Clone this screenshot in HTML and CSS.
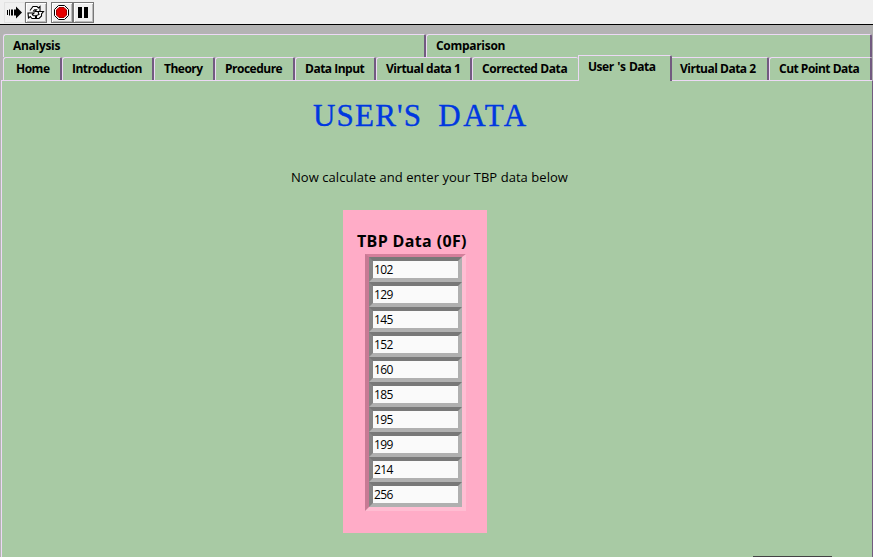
FILE: index.html
```
<!DOCTYPE html>
<html lang="en">
<head>
<meta charset="utf-8">
<title>User's Data</title>
<link rel="stylesheet" href="styles.css">
</head>
<body>
<header class="toolbar">
  <span class="tool run"><svg width="19" height="19" viewBox="0 0 19 19"><path d="M2 7h1v5h-1zM4 6.500h1v6h-1zM6 6.500h2v6h-2zM9 6.500h2V3.500l6 6l-6 6V12.500h-2z"/></svg></span>
  <span class="tool sync"><svg width="19" height="19" viewBox="0 0 19 19" fill="#fff" stroke="#000" stroke-width="1.100"><path d="M4 7.500L7 3.500H11L12.500 5L14 3.500V8.500H9L10.500 6.800H8.500L7 8.500"/><path d="M12 8.500H17.500L15.500 11V13L13 15.500H10.500V12.500L13 11.500Z"/><path d="M2 10H8L6.300 11.800L7.500 12.800H9.500V15.500H6L4.300 13.500L2.500 15Z"/></svg></span>
  <span class="tool stop"><svg width="19" height="19" viewBox="0 0 19 19"><path d="M6.500 2.500h6l4 4v6l-4 4h-6l-4-4v-6z" fill="#fff" stroke="#000"/><path d="M7 4.500h5l2.500 2.500v5l-2.500 2.500h-5l-2.500-2.500v-5z" fill="#e60000" stroke="#a00000"/></svg></span>
  <span class="tool pause"><svg width="19" height="19" viewBox="0 0 19 19" shape-rendering="crispEdges"><path d="M4 4h4v11h-4zM10 4h4v11h-4z"/></svg></span>
</header>
<nav class="tabs">
  <div class="row upper">
    <span class="tab">Analysis</span>
    <span class="tab">Comparison</span>
  </div>
  <div class="row lower">
    <span class="tab">Home</span>
    <span class="tab">Introduction</span>
    <span class="tab">Theory</span>
    <span class="tab">Procedure</span>
    <span class="tab">Data Input</span>
    <span class="tab">Virtual data 1</span>
    <span class="tab flat">Corrected Data</span>
    <span class="tab active">User 's Data</span>
    <span class="tab after">Virtual Data 2</span>
    <span class="tab">Cut Point Data</span>
  </div>
</nav>
<main class="panel">
  <h1>USER'S <span>DATA</span></h1>
  <p>Now calculate and enter your TBP data below</p>
  <section class="card">
    <h2>TBP Data (0F)</h2>
    <div class="array">
      <div class="cell">102</div>
      <div class="cell">129</div>
      <div class="cell">145</div>
      <div class="cell">152</div>
      <div class="cell">160</div>
      <div class="cell">185</div>
      <div class="cell">195</div>
      <div class="cell">199</div>
      <div class="cell">214</div>
      <div class="cell">256</div>
    </div>
  </section>
  <div class="edge"></div>
</main>
</body>
</html>
```
FILE: styles.css
```
* { box-sizing: border-box; }
body {
  margin: 0;
  width: 873px;
  height: 557px;
  overflow: hidden;
  display: flex;
  flex-direction: column;
  background: #b3b3b3;
  color: #000;
  font-family: "Open Sans", "Noto Sans", sans-serif;
}
.toolbar {
  height: 25px;
  flex: none;
  display: flex;
  padding: 2px 0 0 4px;
  background: #f0f0f0;
  border-bottom: 1px solid #000;
}
.tool {
  width: 21px;
  height: 21px;
  border: 1px solid #777;
  box-shadow: inset 1px 1px #fff, inset -1px -1px #bbb;
}
.tool svg { display: block; }
.tool.run { border-color: #e2e2e2; box-shadow: none; }
.tool.sync { width: 22px; }
.tool.stop { width: 22px; margin-left: 4px; }

.tabs { flex: none; padding: 9px 1px 0 3px; }
.row { display: grid; height: 23px; }
.upper { grid-template-columns: 423px 446px; }
.lower { grid-template-columns: 59px 92px 61px 80px 81px 96px 106px 94px 97px 103px; }
.tab {
  height: 23px;
  background: #a8caa4;
  border: 1px solid #edd9f5;
  border-bottom: 0;
  border-right: 2px solid #725b80;
  border-top-left-radius: 3px;
  border-top-right-radius: 2px;
  padding-left: 9px;
  font-size: 12px;
  font-weight: 700;
  letter-spacing: -0.5px;
  line-height: 22px;
  white-space: pre;
}
.upper .tab { letter-spacing: -0.3px; }
.lower .tab:first-child { padding-left: 12px; }
.tab.flat { border-right: 0; letter-spacing: -0.4px; }
.tab.active {
  height: 26px;
  margin-top: -2px;
  position: relative;
  border-top-left-radius: 0;
  word-spacing: 1px;
}
.tab.after { border-left: 0; border-top-left-radius: 0; padding-left: 8px; }

.panel {
  flex: 1;
  margin-left: 1px;
  display: flex;
  flex-direction: column;
  background: #a8caa4;
  border: 1px solid #edd9f5;
  border-right-color: #725b80;
  border-bottom: 0;
}
h1 {
  margin: 17px 0 0 311px;
  height: 36px;
  font: 400 31px/36px "Liberation Serif", serif;
  -webkit-text-stroke: 0.4px #0038e0;
  color: #0038e0;
  white-space: pre;
  letter-spacing: 1.2px;
  word-spacing: 7px;
}
h1 span { letter-spacing: 2.6px; }
p {
  margin: 32px 0 0 289px;
  height: 22px;
  font-size: 13px;
  line-height: 22px;
  letter-spacing: 0.05px;
  white-space: nowrap;
}
.card {
  flex: none;
  width: 144px;
  height: 323px;
  margin: 22px 0 0 341px;
  background: #ffacc7;
  padding: 20px 0 0 14px;
}
h2 {
  margin: 0;
  height: 24px;
  font-size: 16px;
  line-height: 23px;
  font-weight: 700;
  letter-spacing: 0.35px;
  white-space: nowrap;
}
.array {
  width: 101px;
  height: 257px;
  margin-left: 8px;
  border: 4px solid;
  border-color: #d47f9b #ffbdd2 #ffbdd2 #c77a94;
  border-top-width: 3px;
}
.cell {
  width: 93px;
  height: 25px;
  background: #fafafa;
  border: 4px solid;
  border-color: #787878 #b0b0b0 #b0b0b0 #858585;
  padding-left: 1px;
  font-size: 12px;
  letter-spacing: -0.6px;
  line-height: 18px;
}
.edge { flex: none; width: 79px; height: 1px; margin: 23px 0 0 751px; background: #444; }
```
